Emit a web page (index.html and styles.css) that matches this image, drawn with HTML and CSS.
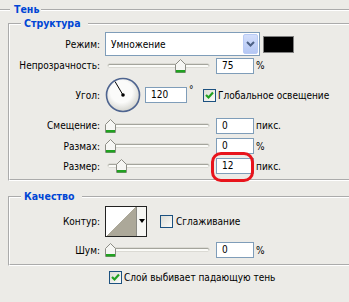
FILE: index.html
```html
<!DOCTYPE html>
<html>
<head>
    <meta charset="utf-8">
    <title>Тень</title>
    <link rel="stylesheet" href="styles.css">
</head>
<body>
    <fieldset class="box outer">
        <legend>Тень</legend>

        <fieldset class="box struct">
            <legend>Структура</legend>

            <div class="row mode">
                <span class="label">Режим:</span>
                <div class="select">
                    <span class="value">Умножение</span>
                    <span class="arrow">
                        <svg width="9" height="6" viewBox="0 0 9 6"><path d="M1 1 L4.5 4.5 L8 1" fill="none" stroke="#4d6185" stroke-width="2"/></svg>
                    </span>
                </div>
                <span class="swatch"></span>
            </div>

            <div class="row opacity">
                <span class="label">Непрозрачность:</span>
                <div class="slider">
                    <svg class="thumb" style="left: 70px" width="11" height="14" viewBox="0 0 11 14"><path d="M0.5 5.5 L5.5 0.5 L10.5 5.5 V13.5 H0.5 Z" fill="#f6f6f3" stroke="#8c8c84"/><rect x="1" y="11" width="9" height="2.5" fill="#21a121"/></svg>
                </div>
                <span class="field">75</span>
                <span class="unit">%</span>
            </div>

            <div class="row angle">
                <span class="label">Угол:</span>
                <svg class="dial" width="36" height="36" viewBox="0 0 36 36">
                    <defs>
                        <radialGradient id="dialFill" cx="45%" cy="40%" r="60%">
                            <stop offset="0.55" stop-color="#fbfbfa"/>
                            <stop offset="1" stop-color="#d4d4ce"/>
                        </radialGradient>
                    </defs>
                    <circle cx="18" cy="18" r="16.5" fill="url(#dialFill)" stroke="#4f6590" stroke-width="1.6"/>
                    <line x1="18" y1="18" x2="10" y2="4.5" stroke="#000" stroke-width="1"/>
                    <circle cx="18" cy="18" r="1.8" fill="#000"/>
                </svg>
                <span class="field wide">120</span>
                <span class="unit deg">°</span>
                <span class="check on"><svg width="11" height="11" viewBox="0 0 11 11"><path d="M2 5 L4.5 7.5 L9 2.5" fill="none" stroke="#21a121" stroke-width="2.2"/></svg></span>
                <span class="check-text">Глобальное освещение</span>
            </div>

            <div class="row distance">
                <span class="label">Смещение:</span>
                <div class="slider">
                    <svg class="thumb" style="left: 0px" width="11" height="14" viewBox="0 0 11 14"><path d="M0.5 5.5 L5.5 0.5 L10.5 5.5 V13.5 H0.5 Z" fill="#f6f6f3" stroke="#8c8c84"/><rect x="1" y="11" width="9" height="2.5" fill="#21a121"/></svg>
                </div>
                <span class="field">0</span>
                <span class="unit">пикс.</span>
            </div>

            <div class="row">
                <span class="label">Размах:</span>
                <div class="slider">
                    <svg class="thumb" style="left: 0px" width="11" height="14" viewBox="0 0 11 14"><path d="M0.5 5.5 L5.5 0.5 L10.5 5.5 V13.5 H0.5 Z" fill="#f6f6f3" stroke="#8c8c84"/><rect x="1" y="11" width="9" height="2.5" fill="#21a121"/></svg>
                </div>
                <span class="field">0</span>
                <span class="unit">%</span>
            </div>

            <div class="row">
                <span class="label">Размер:</span>
                <div class="slider">
                    <svg class="thumb" style="left: 11px" width="11" height="14" viewBox="0 0 11 14"><path d="M0.5 5.5 L5.5 0.5 L10.5 5.5 V13.5 H0.5 Z" fill="#f6f6f3" stroke="#8c8c84"/><rect x="1" y="11" width="9" height="2.5" fill="#21a121"/></svg>
                </div>
                <span class="field marked">12</span>
                <span class="unit">пикс.</span>
            </div>
        </fieldset>

        <fieldset class="box quality">
            <legend>Качество</legend>

            <div class="row contour-row">
                <span class="label">Контур:</span>
                <div class="contour">
                    <span class="curve"></span>
                    <span class="drop"></span>
                </div>
                <span class="check off"></span>
                <span class="check-text">Сглаживание</span>
            </div>

            <div class="row noise">
                <span class="label">Шум:</span>
                <div class="slider">
                    <svg class="thumb" style="left: 0px" width="11" height="14" viewBox="0 0 11 14"><path d="M0.5 5.5 L5.5 0.5 L10.5 5.5 V13.5 H0.5 Z" fill="#f6f6f3" stroke="#8c8c84"/><rect x="1" y="11" width="9" height="2.5" fill="#21a121"/></svg>
                </div>
                <span class="field">0</span>
                <span class="unit">%</span>
            </div>
        </fieldset>

        <div class="row knockout">
            <span class="check on"><svg width="11" height="11" viewBox="0 0 11 11"><path d="M2 5 L4.5 7.5 L9 2.5" fill="none" stroke="#21a121" stroke-width="2.2"/></svg></span>
            <span class="check-text">Слой выбивает падающую тень</span>
        </div>
    </fieldset>
</body>
</html>
```

FILE: styles.css
```css
*{
    box-sizing: border-box;
}

body{
    margin: 0;
    padding-top: 3px;
    background: #ecebe7;
    color: #000;
    font-family: "DejaVu Sans Condensed", "DejaVu Sans", sans-serif;
    font-stretch: condensed;
    font-size: 10px;
    overflow: hidden;
}

/* group boxes */
.box{
    margin: 0;
    padding: 0;
    min-width: 0;
    border: 2px groove #fff;
    border-right: none;
}

.box legend{
    margin-left: 11px;
    padding: 0 7px 0 3px;
    line-height: 13px;
    font-weight: bold;
    font-size: 10.5px;
    color: #0046d5;
}

.outer{
    border-left: none;
    border-bottom: none;
    padding-left: 8px;
}

.outer > legend{
    margin-left: 2px;
    padding: 0 2px 0 4px;
}

.struct{
    margin-top: 1px;
    padding: 2px 0 3px;
}

.quality{
    margin-top: 9px;
    padding: 1px 0 3px;
}

/* rows */
.row{
    display: flex;
    align-items: center;
    height: 20px;
}

.row.mode{ height: 24px; }
.row.opacity{ height: 19px; }
.row.angle{ height: 40px; }
.row.distance{ height: 21px; }
.row.contour-row{ height: 35px; }
.row.noise{ height: 22px; }

.row.knockout{
    margin-top: 2px;
    height: 19px;
    padding-left: 101px;
}

.label{
    width: 90px;
    margin-right: 5px;
    text-align: right;
    white-space: nowrap;
}

/* blend mode select */
.select{
    display: flex;
    align-items: center;
    justify-content: space-between;
    width: 155px;
    height: 24px;
    padding: 1px;
    border: 1px solid #7f9db9;
    background: #fff;
}

.select .value{
    padding-left: 4px;
}

.select .arrow{
    display: flex;
    align-items: center;
    justify-content: center;
    width: 15px;
    height: 20px;
    border: 1px solid #b9cbf5;
    border-radius: 2px;
    background: linear-gradient(#d3defb, #b4c7f4);
}

.swatch{
    width: 31px;
    height: 17px;
    margin-left: 3px;
    border: 1px solid #808080;
    background: #000;
}

/* sliders */
.slider{
    position: relative;
    width: 104px;
    height: 14px;
}

.slider::before{
    content: "";
    position: absolute;
    left: 3px;
    right: 0;
    top: 5px;
    height: 3px;
    border-radius: 2px;
    background: #fbfbf8;
    box-shadow: inset 0 1px 0 #a4a49c, 0 0 0 0.5px #c9c9c1;
}

.thumb{
    position: absolute;
    top: 0;
}

.field{
    width: 38px;
    height: 16px;
    margin-left: 7px;
    padding-left: 5px;
    line-height: 14px;
    border: 1px solid #7f9db9;
    background: #fff;
}

.field.wide{
    width: 42px;
    margin-left: 4px;
}

.field.marked{
    position: relative;
}

.field.marked::after{
    content: "";
    position: absolute;
    left: -6px;
    top: -7px;
    width: 37px;
    height: 24px;
    border: 3px solid #e8141c;
    border-radius: 10px;
}

.unit{
    margin-left: 2px;
}

.unit.deg{
    width: 14px;
    align-self: flex-start;
    margin-top: 9px;
}

.dial{
    display: block;
}

/* checkboxes */
.check{
    display: flex;
    align-items: center;
    justify-content: center;
    width: 13px;
    height: 13px;
    border: 1px solid #1c5180;
    background: linear-gradient(135deg, #dcdcd5, #fbfbf9);
}

.check-text{
    margin-left: 2px;
    white-space: nowrap;
}

.contour-row .check{
    margin-left: 13px;
}

.contour-row .check-text{
    margin-left: 3px;
}

/* contour picker */
.contour{
    display: flex;
    width: 42px;
    height: 31px;
    border: 1px solid #222;
    background: #fff;
}

.contour .curve{
    width: 30px;
    background: linear-gradient(to bottom right, #fff 50%, #aca899 50%);
}

.contour .drop{
    flex: 1;
    position: relative;
    border-left: 1px solid #8a8a84;
    background: #f6f6f3;
}

.contour .drop::after{
    content: "";
    position: absolute;
    left: 2px;
    top: 12px;
    border-left: 3px solid transparent;
    border-right: 3px solid transparent;
    border-top: 4px solid #000;
}
```
